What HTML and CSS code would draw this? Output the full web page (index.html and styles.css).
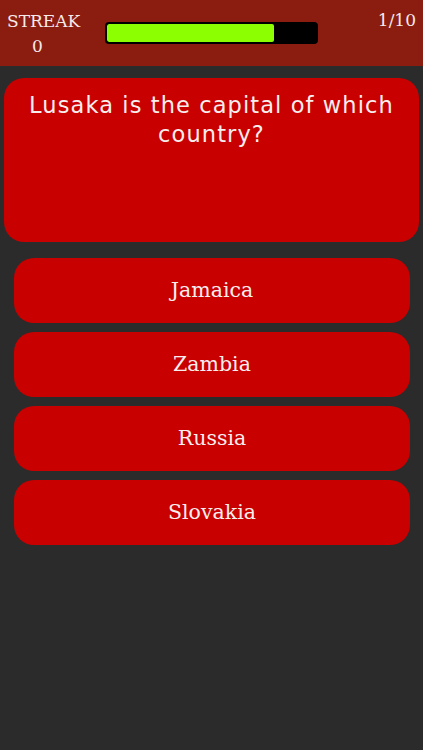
FILE: index.html
```html
<!DOCTYPE html>
<html>
<head>
<meta charset="utf-8">
<link rel="stylesheet" href="styles.css">
</head>
<body>
<header class="topbar">
  <div class="streak">
    <div>STREAK</div>
    <div class="streak-value">0</div>
  </div>
  <div class="progress"><div class="fill" style="width:80%"></div></div>
  <div class="count">1/10</div>
</header>
<main class="content">
  <section class="question">Lusaka is the capital of which country?</section>
  <div class="answers">
    <button class="answer">Jamaica</button>
    <button class="answer">Zambia</button>
    <button class="answer">Russia</button>
    <button class="answer">Slovakia</button>
  </div>
</main>
</body>
</html>
```
FILE: styles.css
```css
html, body {
  margin: 0;
  padding: 0;
  height: 100%;
}
body {
  background: #2b2b2b;
  font-family: "DejaVu Serif", serif;
  color: #fff;
}
.topbar {
  height: 66px;
  background: #8b1c10;
  display: flex;
  align-items: flex-start;
  padding: 0 7px;
  box-sizing: border-box;
}
.streak {
  width: 73px;
  text-align: center;
  font-size: 17px;
  line-height: 25px;
  padding-top: 9px;
  color: #f4eaea;
}
.streak-value {
  padding-right: 12px;
}
.progress {
  margin-left: 25px;
  margin-top: 22px;
  width: 213px;
  height: 22px;
  box-sizing: border-box;
  border: 2px solid #000;
  border-radius: 4px;
  background: #000;
  overflow: hidden;
}
.fill {
  height: 100%;
  background: #8cff00;
  border-radius: 2px;
}
.count {
  margin-left: auto;
  font-size: 17px;
  line-height: 25px;
  padding-top: 8px;
  color: #f4eaea;
}
.content {
  display: flex;
  flex-direction: column;
}
.question {
  margin: 12px 4px 0 4px;
  height: 164px;
  box-sizing: border-box;
  background: #c80000;
  border-radius: 20px;
  padding: 13px 10px 0;
  font-family: "DejaVu Sans", sans-serif;
  font-size: 22.5px;
  letter-spacing: 1.1px;
  line-height: 29px;
  text-align: center;
  color: #f8eeee;
}
.answers {
  display: flex;
  flex-direction: column;
  gap: 9px;
  margin: 16px 13px 0 14px;
}
.answer {
  height: 65px;
  border: none;
  border-radius: 20px;
  background: #c80000;
  color: #f8eeee;
  font-family: "DejaVu Serif", serif;
  font-size: 20.5px;
  padding: 0 0 2px;
  text-align: center;
}
```
